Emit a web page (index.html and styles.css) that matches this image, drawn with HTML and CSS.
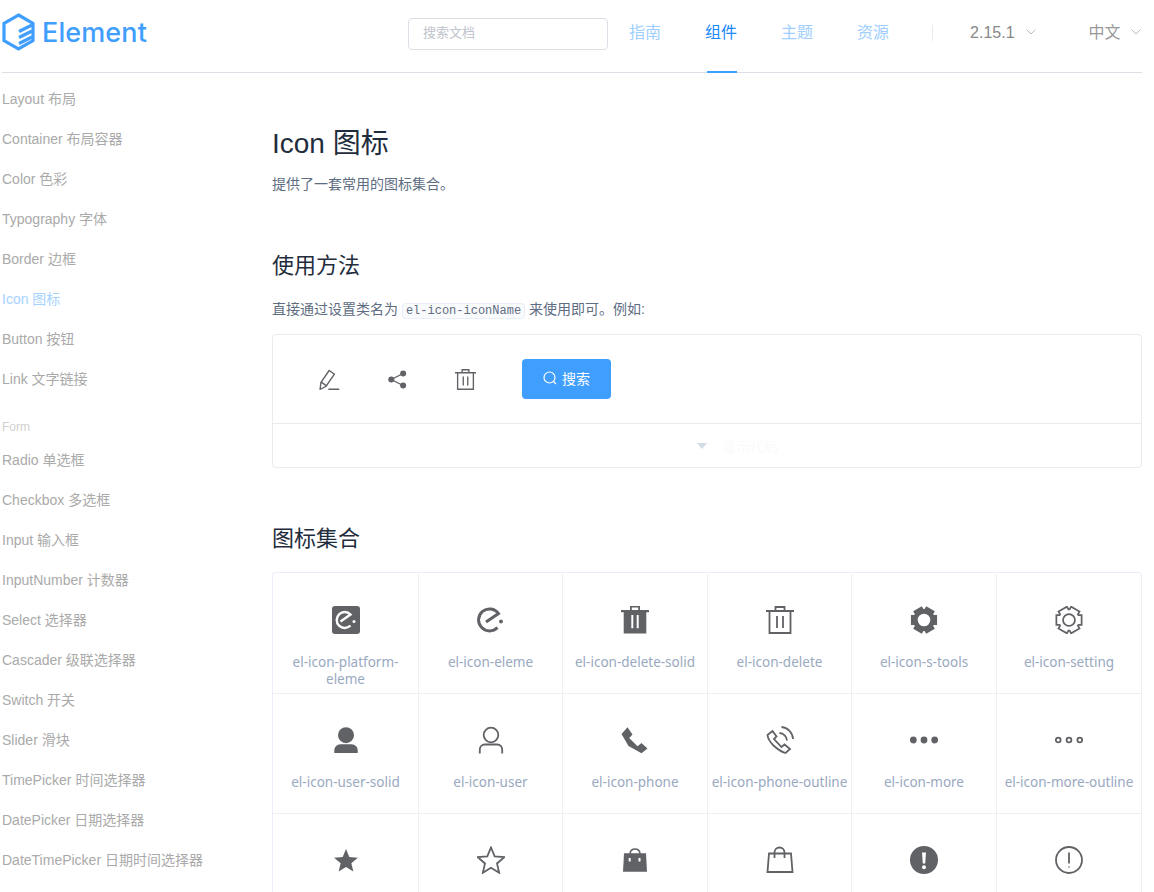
FILE: index.html
```html
<!DOCTYPE html>
<html lang="zh-CN">
<head>
  <meta charset="UTF-8">
  <title>Icon 图标 - Element</title>
  <link rel="stylesheet" href="styles.css">
</head>
<body>
  <div class="page">
    <header class="topbar">
      <a class="logo">
        <svg class="logo-mark" viewBox="0 0 33 38">
          <path d="M16.5 2 L31 10.4 V27.6 L16.5 36 L2 27.6 V10.4 Z"/>
          <path d="M17 18.5 L30 12 M17 24.5 L30 18 M17 30.5 L30 24"/>
        </svg>
        <span class="logo-text">Element</span>
      </a>
      <input class="search" type="text" placeholder="搜索文档">
      <nav class="main-nav">
        <a>指南</a>
        <a class="active">组件</a>
        <a>主题</a>
        <a>资源</a>
      </nav>
      <span class="divider"></span>
      <span class="version">2.15.1
        <svg class="chevron" viewBox="0 0 10 6"><path d="M0.5 0.5 L5 5 L9.5 0.5"/></svg>
      </span>
      <span class="lang">中文
        <svg class="chevron" viewBox="0 0 10 6"><path d="M0.5 0.5 L5 5 L9.5 0.5"/></svg>
      </span>
    </header>

    <div class="content">
      <aside class="side-nav">
        <ul>
          <li>Layout 布局</li>
          <li>Container 布局容器</li>
          <li>Color 色彩</li>
          <li>Typography 字体</li>
          <li>Border 边框</li>
          <li class="active">Icon 图标</li>
          <li>Button 按钮</li>
          <li>Link 文字链接</li>
        </ul>
        <div class="group-title">Form</div>
        <ul>
          <li>Radio 单选框</li>
          <li>Checkbox 多选框</li>
          <li>Input 输入框</li>
          <li>InputNumber 计数器</li>
          <li>Select 选择器</li>
          <li>Cascader 级联选择器</li>
          <li>Switch 开关</li>
          <li>Slider 滑块</li>
          <li>TimePicker 时间选择器</li>
          <li>DatePicker 日期选择器</li>
          <li>DateTimePicker 日期时间选择器</li>
        </ul>
      </aside>

      <main class="doc">
        <h2>Icon 图标</h2>
        <p class="intro">提供了一套常用的图标集合。</p>

        <h3>使用方法</h3>
        <p class="usage">直接通过设置类名为 <code>el-icon-iconName</code> 来使用即可。例如:</p>

        <div class="demo">
          <div class="demo-source">
            <div class="demo-icons">
              <svg class="demo-icon line" viewBox="0 0 28 28"><path d="M1.5 27 L2.5 18 L13.5 2 L20.5 7 L9.5 23 Z M3 17.5 L10 22.5 M12.5 27 H27"/></svg>
              <svg class="demo-icon line" viewBox="0 0 28 28"><path d="M21.5 6 L5.7 14 L21.5 22"/><circle class="dot" cx="21.5" cy="6" r="4"/><circle class="dot" cx="5.7" cy="14" r="4"/><circle class="dot" cx="21.5" cy="22" r="4"/></svg>
              <svg class="demo-icon line" viewBox="0 0 28 28"><path d="M0 5 H28 M9.5 5 V1 H18.5 V5 M3.5 5 V27 H24.5 V5 M11 10 V22 M17 10 V22"/></svg>
            </div>
            <button class="btn-primary">
              <svg class="btn-icon" viewBox="0 0 14 14"><circle cx="6.5" cy="6.5" r="5.5"/><path d="M10.5 10.5 L13 13"/></svg>
              搜索
            </button>
          </div>
          <div class="demo-toggle">
            <span class="caret"></span>
            <span class="toggle-text">显示代码</span>
          </div>
        </div>

        <h3>图标集合</h3>
        <ul class="icon-list">
          <li>
            <svg class="icon" viewBox="0 0 28 28"><rect width="28" height="28" rx="3"/><path class="cut" d="M8.5 15.5 L18.5 8.5 A8 8 0 1 0 18.5 19.5"/><circle class="cut-dot" cx="22" cy="15.5" r="1.5"/></svg>
            <span>el-icon-platform-eleme</span>
          </li>
          <li>
            <svg class="icon line heavy" viewBox="0 0 28 28"><path d="M9 16 L21.5 7.5 A11 11 0 1 0 20.5 21.5"/><circle class="dot" cx="24" cy="15.5" r="1.9"/></svg>
            <span>el-icon-eleme</span>
          </li>
          <li>
            <svg class="icon" viewBox="0 0 28 28"><path fill-rule="evenodd" d="M9 0 H19 V4 H28 V6.2 H25.3 V27.5 H2.7 V6.2 H0 V4 H9 Z M10.8 1.6 V4 H17.2 V1.6 Z M10.3 9 V22.3 H12.3 V9 Z M15.7 9 V22.3 H17.7 V9 Z"/></svg>
            <span>el-icon-delete-solid</span>
          </li>
          <li>
            <svg class="icon line" viewBox="0 0 28 28"><path d="M0 5 H28 M9.5 5 V1 H18.5 V5 M3.5 5 V27 H24.5 V5 M11 10 V22 M17 10 V22"/></svg>
            <span>el-icon-delete</span>
          </li>
          <li>
            <svg class="icon" viewBox="0 0 28 28"><path fill-rule="evenodd" d="M27.07 8.98 V19.02 L23.8 18.99 L23.23 19.99 L24.88 22.81 L16.19 27.83 L14.58 24.98 H13.42 L11.81 27.83 L3.12 22.81 L4.77 19.99 L4.2 18.99 L0.93 19.02 V8.98 L4.2 9.01 L4.77 8.01 L3.12 5.19 L11.81 0.17 L13.42 3.02 H14.58 L16.19 0.17 L24.88 5.19 L23.23 8.01 L23.8 9.01 Z M14 7.7 A6.3 6.3 0 1 0 14 20.3 A6.3 6.3 0 1 0 14 7.7 Z"/></svg>
            <span>el-icon-s-tools</span>
          </li>
          <li>
            <svg class="icon line" viewBox="-0.5 -0.5 29 29"><path d="M27.07 8.98 V19.02 L23.8 18.99 L23.23 19.99 L24.88 22.81 L16.19 27.83 L14.58 24.98 H13.42 L11.81 27.83 L3.12 22.81 L4.77 19.99 L4.2 18.99 L0.93 19.02 V8.98 L4.2 9.01 L4.77 8.01 L3.12 5.19 L11.81 0.17 L13.42 3.02 H14.58 L16.19 0.17 L24.88 5.19 L23.23 8.01 L23.8 9.01 Z"/><circle cx="14" cy="14" r="6.2"/></svg>
            <span>el-icon-setting</span>
          </li>

          <li>
            <svg class="icon" viewBox="0 0 28 28"><circle cx="14" cy="9.2" r="8"/><path d="M2.3 27 V24 A6 6 0 0 1 8.3 18.2 H19.7 A6 6 0 0 1 25.7 24 V27 Z"/></svg>
            <span>el-icon-user-solid</span>
          </li>
          <li>
            <svg class="icon line" viewBox="0 0 28 28"><circle cx="14" cy="9" r="7.3"/><path d="M2.8 27.5 V23.5 A5 5 0 0 1 7.8 18.5 H20.2 A5 5 0 0 1 25.2 23.5 V27.5"/></svg>
            <span>el-icon-user</span>
          </li>
          <li>
            <svg class="icon" viewBox="0 0 28 28"><path d="M6.5 1.3 L11.5 8.5 L8.2 12 L16.5 20.3 L20.5 17 L26.5 22.5 L20.5 27.3 L7.5 20 L0.5 8 Z"/></svg>
            <span>el-icon-phone</span>
          </li>
          <li>
            <svg class="icon line" viewBox="0 0 28 28"><path d="M6.5 5 L10.5 10.5 L8 13 L15.5 21 L18.5 18.5 L24 23 L19.5 27 Q14 25.5 7.5 19.5 Q2 14 1.5 9 Z M15.5 1 A12.5 12.5 0 0 1 27 13 M13.5 7 A8 8 0 0 1 21 14.5"/></svg>
            <span>el-icon-phone-outline</span>
          </li>
          <li>
            <svg class="icon" viewBox="0 0 28 28"><circle cx="3.3" cy="14" r="3.4"/><circle cx="14" cy="14" r="3.4"/><circle cx="24.7" cy="14" r="3.4"/></svg>
            <span>el-icon-more</span>
          </li>
          <li>
            <svg class="icon line" viewBox="0 0 28 28"><circle cx="3.2" cy="14" r="2.4"/><circle cx="14" cy="14" r="2.4"/><circle cx="24.8" cy="14" r="2.4"/></svg>
            <span>el-icon-more-outline</span>
          </li>

          <li>
            <svg class="icon" viewBox="0 0 28 28"><path d="M14 3 L17.3 10.95 L25.9 11.64 L19.35 17.24 L21.35 25.6 L14 21.1 L6.65 25.6 L8.65 17.24 L2.1 11.64 L10.7 10.95 Z"/></svg>
            <span>el-icon-star-on</span>
          </li>
          <li>
            <svg class="icon line" viewBox="0 0 28 28"><path d="M14 1.5 L17.7 10.4 L27.3 11.17 L20 17.45 L22.2 26.8 L14 21.8 L5.8 26.8 L8 17.45 L0.7 11.17 L10.3 10.4 Z"/></svg>
            <span>el-icon-star-off</span>
          </li>
          <li>
            <svg class="icon" viewBox="0 0 28 28"><path fill-rule="evenodd" d="M3 7.3 H8.3 A5.8 5.8 0 0 1 19.8 7.3 H25 L26 25.7 H2 Z M9.9 7.3 H18.2 A4.2 4.2 0 0 0 9.9 7.3 Z M7.7 12 V15.5 H9.7 V12 Z M17.5 12 V15.5 H19.5 V12 Z"/></svg>
            <span>el-icon-s-goods</span>
          </li>
          <li>
            <svg class="icon line" viewBox="0 0 28 28"><path d="M3 7.5 H25 L26.5 26 H1.5 Z M8.5 12 V6.5 A5 5 0 0 1 18.5 6.5 V12"/></svg>
            <span>el-icon-goods</span>
          </li>
          <li>
            <svg class="icon" viewBox="0 0 28 28"><path fill-rule="evenodd" d="M14 0 A14 14 0 1 0 14 28 A14 14 0 1 0 14 0 Z M12 6.5 H16 L15.2 17.5 H12.8 Z M14 19.3 A2 2 0 1 0 14 23.3 A2 2 0 1 0 14 19.3 Z"/></svg>
            <span>el-icon-warning</span>
          </li>
          <li>
            <svg class="icon line" viewBox="0 0 28 28"><circle cx="14" cy="14" r="13"/><path d="M14 6.5 V17.5"/><circle class="dot" cx="14" cy="21" r="0.8"/></svg>
            <span>el-icon-warning-outline</span>
          </li>
        </ul>
      </main>
    </div>
  </div>
</body>
</html>
```

FILE: styles.css
```css
html, body {
  margin: 0;
  height: 100%;
  overflow: hidden;
  background: #fff;
}

body {
  font-family: "Liberation Sans", "Noto Sans CJK SC", sans-serif;
}

ul {
  list-style: none;
  margin: 0;
  padding: 0;
}

.page {
  width: 1140px;
  margin-left: 2px;
}

/* top bar */
.topbar {
  display: flex;
  align-items: flex-start;
  height: 72px;
  border-bottom: 1px solid #dcdfe6;
}

.logo {
  display: flex;
  align-items: center;
  width: 145px;
  height: 38px;
  margin-top: 13px;
}

.logo-mark {
  width: 33px;
  height: 38px;
  flex: none;
  fill: none;
  stroke: #409eff;
  stroke-width: 3.2;
}

.logo-text {
  margin-left: 7px;
  font-family: "Inter", sans-serif;
  font-size: 27px;
  font-weight: 500;
  letter-spacing: 0.1px;
  color: #409eff;
}

.search {
  box-sizing: border-box;
  width: 200px;
  height: 32px;
  margin: 18px 0 0 261px;
  padding: 0 14px 4px;
  border: 1px solid #dcdfe6;
  border-radius: 4px;
  outline: none;
  font-family: inherit;
  font-size: 13px;
}

.search::placeholder {
  color: #c0c4cc;
}

.main-nav {
  display: flex;
  gap: 44px;
  margin-left: 21px;
}

.main-nav a {
  position: relative;
  font-size: 16px;
  line-height: 65px;
  color: #a0cfff;
}

.main-nav a.active {
  color: #1989fa;
}

.main-nav a.active::after {
  content: "";
  position: absolute;
  left: 2px;
  right: 0;
  top: 71px;
  height: 2px;
  background: #409eff;
}

.divider {
  width: 1px;
  height: 16px;
  margin: 25px 37px 0 43px;
  background: #ebebeb;
}

.version, .lang {
  display: flex;
  align-items: center;
  gap: 11px;
  font-size: 16px;
  line-height: 65px;
  color: #888;
}

.lang {
  margin-left: 53px;
  gap: 10px;
  color: #999;
}

.chevron {
  width: 10px;
  height: 6px;
  margin-top: -2px;
  fill: none;
  stroke: #bbb;
}

/* sidebar */
.content {
  display: flex;
}

.side-nav {
  width: 270px;
  flex: none;
  padding-top: 6px;
}

.side-nav li {
  font-size: 14px;
  line-height: 40px;
  color: #aaa;
}

.side-nav li.active {
  color: #a6d2ff;
}

.group-title {
  margin-top: 15px;
  font-size: 12px;
  line-height: 26px;
  color: #d0d0d0;
}

/* doc body */
.doc {
  flex: 1;
  min-width: 0;
}

h2 {
  margin: 51px 0 0;
  font-size: 28px;
  font-weight: 400;
  line-height: 40px;
  color: #1f2d3d;
}

h3 {
  margin: 56px 0 0;
  font-size: 22px;
  font-weight: 400;
  line-height: 30px;
  color: #1f2d3d;
}

p {
  font-size: 14px;
  line-height: 21px;
  color: #5e6d82;
}

.intro {
  margin: 10px 0 0;
}

.usage {
  margin: 18px 0 0;
}

code {
  padding: 0 3px;
  border: 1px solid #eaeefb;
  border-radius: 4px;
  background: #f9fafc;
  font-family: "Liberation Mono", monospace;
  font-size: 12px;
  line-height: 1;
}

.demo {
  margin-top: 14px;
  border: 1px solid #ebebeb;
  border-radius: 4px;
}

.demo-source {
  display: flex;
  align-items: center;
  height: 88px;
  padding-left: 46px;
  border-bottom: 1px solid #ebebeb;
}

.demo-icons {
  display: flex;
  gap: 47px;
  margin-right: 46px;
}

.demo-icon {
  width: 21px;
  height: 21px;
}

.btn-primary {
  display: flex;
  align-items: center;
  justify-content: center;
  gap: 5px;
  width: 89px;
  height: 40px;
  padding: 0 0 2px;
  border: none;
  border-radius: 4px;
  background: #409eff;
  font-family: inherit;
  font-size: 14px;
  color: #fff;
}

.btn-icon {
  width: 14px;
  height: 14px;
  fill: none;
  stroke: #fff;
  stroke-width: 1.2;
}

.demo-toggle {
  display: flex;
  align-items: center;
  height: 43px;
  padding-left: 424px;
}

.caret {
  width: 0;
  height: 0;
  border-left: 5.5px solid transparent;
  border-right: 5.5px solid transparent;
  border-top: 6px solid #d3dce6;
  margin-top: 1px;
}

.toggle-text {
  margin-left: 15px;
  font-size: 14px;
  color: #f9fafc;
}

/* icon grid */
.icon-list {
  display: grid;
  grid-template-columns: 146px 144px 145px 144px 145px 145px;
  grid-auto-rows: 120px;
  margin-top: 18px;
  padding-top: 1px;
  border-top: 1px solid #eaeefb;
  border-left: 1px solid #eaeefb;
  border-radius: 4px 4px 0 0;
}

.icon-list li {
  box-sizing: border-box;
  display: flex;
  flex-direction: column;
  align-items: center;
  padding: 32px 2px 0;
  border-right: 1px solid #eeeff3;
  border-bottom: 1px solid #eeeff3;
  text-align: center;
}

.icon-list span {
  margin-top: 20px;
  font-family: "Noto Sans", "Noto Sans CJK SC", sans-serif;
  font-size: 13.5px;
  line-height: 17px;
  color: #99a9bf;
}

.icon {
  width: 28px;
  height: 28px;
  flex: none;
  fill: #606266;
}

.line {
  fill: none;
  stroke: #606266;
  stroke-width: 1.8;
}

.heavy {
  stroke-width: 3;
}

.dot {
  fill: #606266;
  stroke: none;
}

.cut {
  fill: none;
  stroke: #fff;
  stroke-width: 2.4;
}

.cut-dot {
  fill: #fff;
}
```
